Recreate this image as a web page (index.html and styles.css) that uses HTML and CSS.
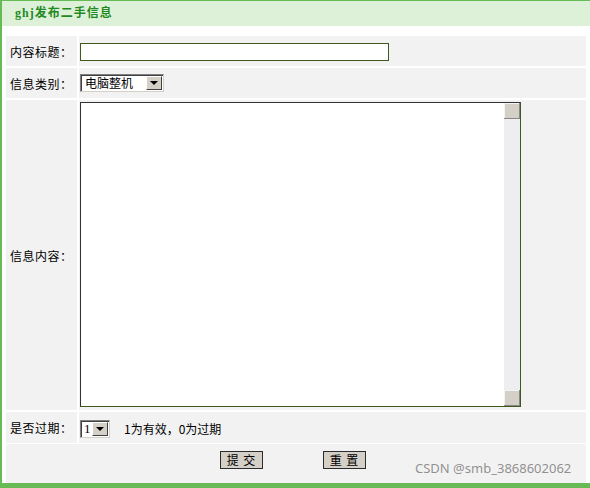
FILE: index.html
```html
<!DOCTYPE html>
<html>
<head>
<meta charset="utf-8">
<link rel="stylesheet" href="styles.css">
</head>
<body>
<div class="page">
  <div class="head">ghj发布二手信息</div>
  <div class="form">
    <div class="label">内容标题：</div>
    <div class="val"><div class="input"></div></div>

    <div class="label">信息类别：</div>
    <div class="val">
      <div class="select sel-cat"><span class="sel-text">电脑整机</span><span class="sel-btn"><i class="tri"></i></span></div>
    </div>

    <div class="label">信息内容：</div>
    <div class="val val-area">
      <div class="area">
        <div class="area-body"></div>
        <div class="sbar"><div class="sbtn"></div><div class="strack"></div><div class="sbtn"></div></div>
      </div>
    </div>

    <div class="label">是否过期：</div>
    <div class="val">
      <div class="select sel-num"><span class="sel-text">1</span><span class="sel-btn"><i class="tri"></i></span></div>
      <span class="hint">1为有效，0为过期</span>
    </div>

    <div class="actions">
      <div class="btn">提 交</div>
      <div class="btn">重 置</div>
    </div>
  </div>
  <div class="foot"></div>
  <div class="watermark">CSDN @smb_3868602062</div>
</div>
</body>
</html>
```

FILE: styles.css
```css
html, body {
  margin: 0;
  padding: 0;
  background: #ffffff;
}
body {
  font-family: "Noto Sans CJK SC", "Liberation Sans", sans-serif;
  font-size: 12px;
  color: #000;
}
.page {
  position: relative;
  width: 590px;
  height: 488px;
  box-sizing: border-box;
  border-left: 2px solid #66bb55;
  border-top: 1px solid #66bb55;
  display: flex;
  flex-direction: column;
}
.head {
  height: 25px;
  background: #ddf0d8;
  color: #1f8a1f;
  font-weight: bold;
  font-size: 12px;
  letter-spacing: 1px;
  line-height: 25px;
  padding-left: 13px;
  font-family: "Liberation Serif", "Noto Sans CJK SC", serif;
}
.form {
  margin: 10px 2px 0 4px;
  display: grid;
  grid-template-columns: 71px 507px;
  grid-template-rows: 30px 30px 310px 31px 38px;
  column-gap: 2px;
  row-gap: 2px;
}
.label, .val, .actions {
  background: #f2f2f2;
}
.label {
  display: flex;
  align-items: center;
  padding-left: 4px;
  white-space: nowrap;
  letter-spacing: 0.5px;
}
.val {
  display: flex;
  align-items: center;
  padding-left: 1px;
}
.val-area {
  align-items: flex-start;
  padding-top: 2px;
}
.actions {
  grid-column: 1 / 3;
  display: flex;
  justify-content: center;
  align-items: flex-start;
  gap: 60px;
  padding-top: 7px;
  padding-right: 6px;
  margin-top: -1px;
}
.input {
  width: 307px;
  height: 16px;
  border: 1px solid #3f5a1e;
  background: #fff;
  margin-top: 1px;
}
.select {
  display: flex;
  height: 18px;
  box-sizing: border-box;
  border: 1px solid #7f7f7f;
  border-right-color: #d4d0c8;
  border-bottom-color: #d4d0c8;
  background: #fff;
  box-shadow: inset 1px 1px 0 #404040;
}
.sel-cat { width: 84px; }
.sel-num { width: 30px; margin-top: 2px; }
.sel-text {
  flex: 1;
  line-height: 16px;
  padding-left: 4px;
  white-space: nowrap;
  overflow: hidden;
}
.sel-num .sel-text { padding-left: 3px; font-family: "Liberation Serif", serif; font-size: 13px; }
.sel-btn {
  width: 16px;
  height: 14px;
  margin: 1px 1px 0 0;
  box-sizing: border-box;
  background: #d4d0c8;
  border: 1px solid #fff;
  border-right-color: #404040;
  border-bottom-color: #404040;
  display: flex;
  align-items: center;
  justify-content: center;
}
.tri {
  width: 0;
  height: 0;
  border-left: 4px solid transparent;
  border-right: 4px solid transparent;
  border-top: 4px solid #000;
}
.hint {
  margin-left: 14px;
  margin-top: 2px;
}
.area {
  width: 441px;
  height: 305px;
  box-sizing: border-box;
  border: 1px solid #3f5a1e;
  border-top-color: #333;
  border-left-color: #333;
  display: flex;
  background: #fff;
}
.area-body { flex: 1; }
.sbar {
  width: 16px;
  display: flex;
  flex-direction: column;
  background: #eeedf0;
}
.sbtn {
  height: 16px;
  background: #d4d0c8;
  box-shadow: inset -1px -1px 0 #888, inset 1px 1px 0 #f4f4f4;
}
.strack { flex: 1; }
.btn {
  width: 43px;
  height: 18px;
  box-sizing: border-box;
  border: 1px solid #2c2c2c;
  background: #d4d0c8;
  text-align: center;
  line-height: 16px;
  font-size: 12px;
  letter-spacing: 1px;
}
.foot {
  margin-top: auto;
  height: 8px;
  background: #66bb55;
  margin-left: -2px;
}
.watermark {
  position: absolute;
  left: 413px;
  top: 458px;
  color: rgba(110, 110, 110, 0.75);
  font-family: "Noto Sans", "Liberation Sans", sans-serif;
  font-size: 13px;
  white-space: nowrap;
}
```
